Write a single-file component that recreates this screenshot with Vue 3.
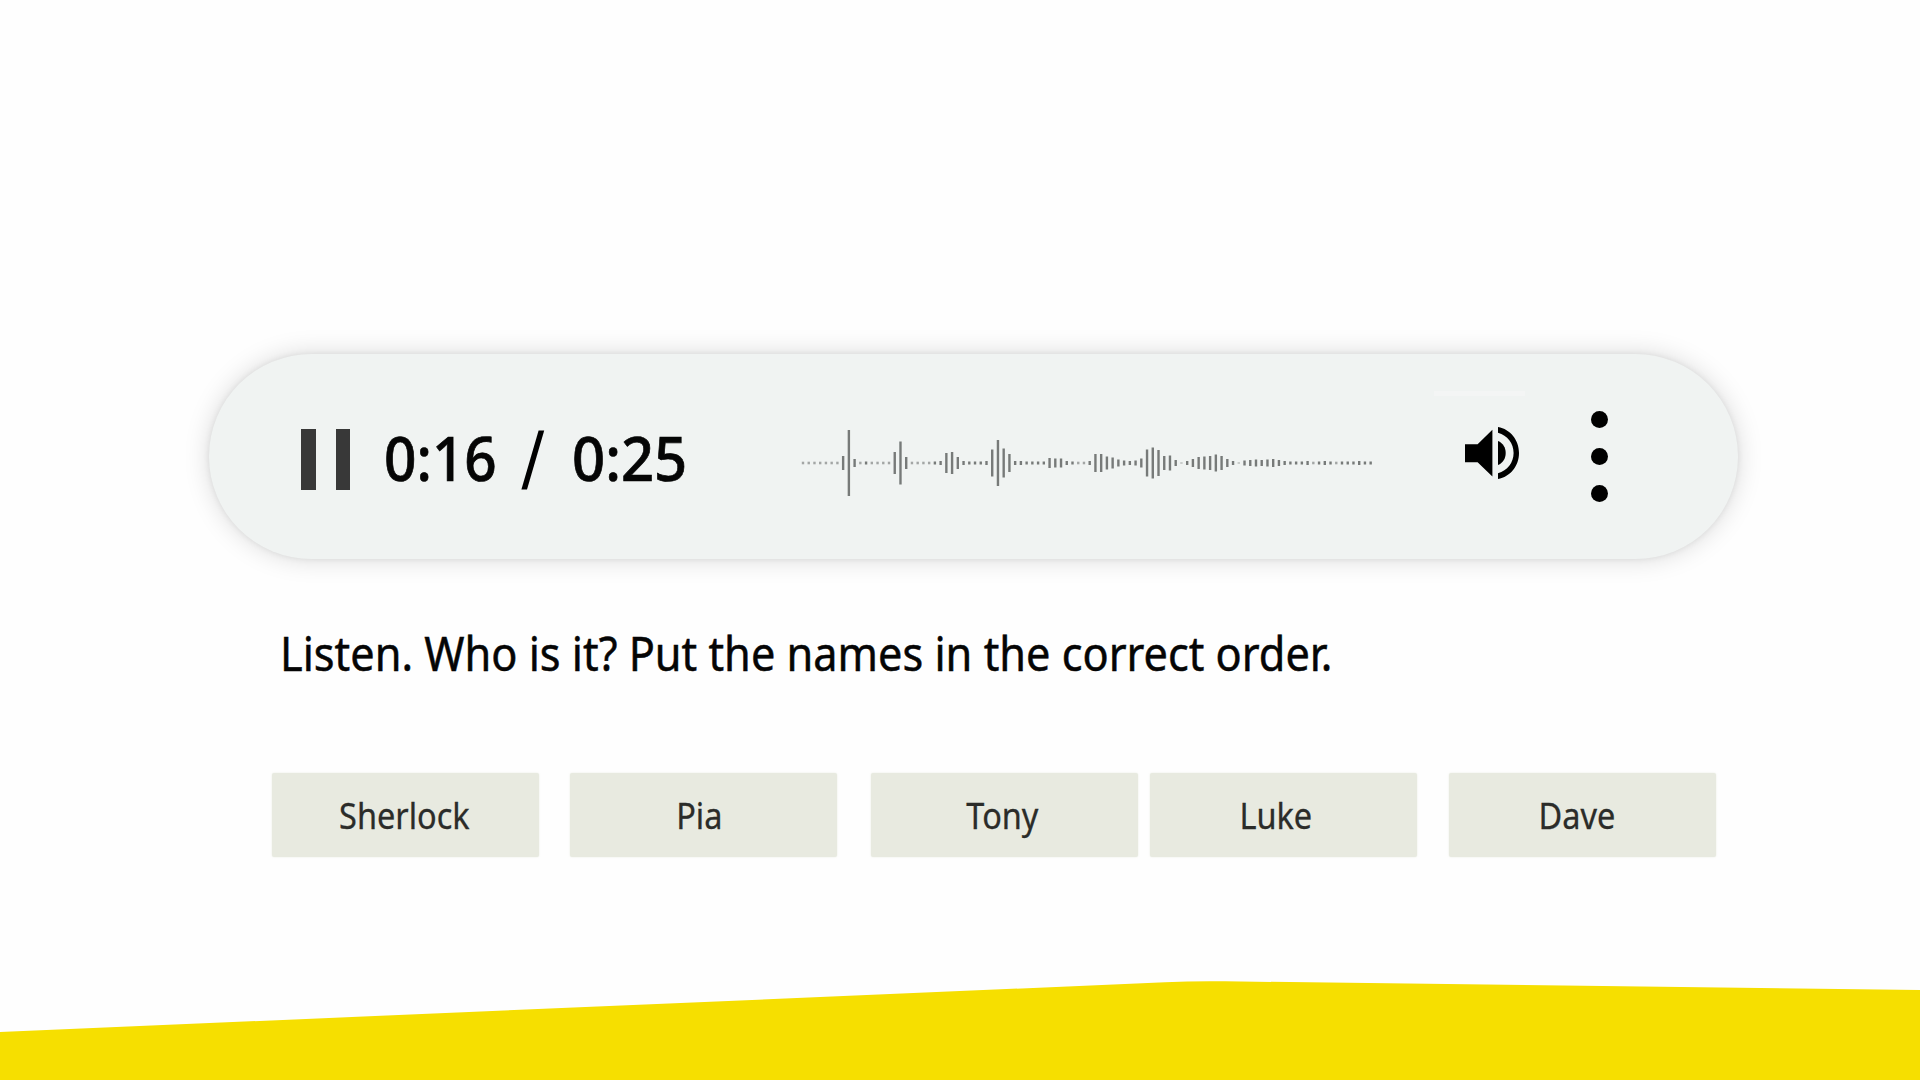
<template>
  <div class="stage">
    <div class="player">
      <button class="pause" aria-label="Pause"><span class="bar"></span><span class="bar"></span></button>
      <div class="time">
        <span class="num cur">0:16</span>
        <svg class="slash" viewBox="0 0 24 60"><path d="M17.6 0.5H23.2L6 59.5H0.4Z" /></svg>
        <span class="num total">0:25</span>
      </div>
      <svg class="wave" viewBox="0 0 572 70">
        <line
          v-for="(h, i) in levels"
          :key="i"
          :x1="2 + i * 5.734"
          :x2="2 + i * 5.734"
          :y1="35 - h / 2"
          :y2="35 + h / 2"
          :class="{ dim: h < 3 }"
        />
      </svg>
      <div class="volume">
        <span class="glint"></span>
        <svg class="speaker" viewBox="0 0 54 52">
          <path d="M0 17.3H12.6L27.4 2.7V49.6L12.6 35.3H0Z" />
          <path d="M33 14C37.9 16 40.7 20.6 40.7 26S37.9 36 33 38Z" />
          <path d="M33 0C45.4 2.2 54 13 54 26S45.4 49.8 33 52V46.2C42.4 43.6 48.6 35.6 48.6 26S42.4 8.4 33 5.8Z" />
        </svg>
      </div>
      <div class="menu"><span></span><span></span><span></span></div>
    </div>

    <p class="prompt"><span class="prompt-text">Listen. Who is it? Put the names in the correct order.</span></p>

    <div class="names">
      <div v-for="name in names" :key="name" class="name" :class="name.toLowerCase()">
        <span>{{ name }}</span>
      </div>
    </div>

    <svg class="ground" viewBox="0 0 1920 100">
      <path d="M0 52L1165 2.3Q1195 0.8 1225 1.3L1920 10V100H0Z" />
    </svg>
  </div>
</template>

<script setup>
const names = ['Sherlock', 'Pia', 'Tony', 'Luke', 'Dave']

// bar heights of the waveform, left to right
const levels = [
  2.6, 2.6, 2.6, 2.6, 2.6, 2.6, 2.6, 14, 66, 8,
  2.6, 3, 2.6, 2.6, 2.6, 2.6, 22, 43, 12, 2.6,
  2.6, 2.6, 2.6, 3, 4, 20, 22, 12, 4, 3,
  3, 3, 4, 27, 46, 29, 18, 4, 4, 3,
  3, 3, 3, 10, 9, 9, 4, 3, 2.6, 2.6,
  4, 18, 18, 13, 11, 7, 5, 4, 5, 9,
  27, 31, 26, 14, 15, 6, 1, 4, 8, 12,
  13, 14, 17, 14, 8, 4, 1, 5, 6, 7,
  6, 7, 8, 6, 4, 3, 3, 3, 4, 2.6,
  3, 4, 3, 2.6, 3, 3, 3, 4, 3, 3
]
</script>

<style>
body {
  margin: 0;
  overflow: hidden;
}
</style>

<style scoped>
.stage {
  width: 1920px;
  height: 1080px;
  box-sizing: border-box;
  padding-top: 354px;
  display: flex;
  flex-direction: column;
  background: #fefefe;
  color: #050505;
  font-family: "Noto Sans", sans-serif;
  overflow: hidden;
}

.player {
  width: 1529px;
  height: 205px;
  margin-left: 209px;
  box-sizing: border-box;
  padding-left: 92px;
  flex-shrink: 0;
  display: flex;
  align-items: center;
  background: #f0f3f2;
  border-radius: 103px;
  box-shadow: 0 0 6px rgba(0, 0, 0, 0.08), 0 0 26px rgba(0, 0, 0, 0.15);
}

.pause {
  display: flex;
  gap: 20px;
  width: 49px;
  height: 61px;
  margin-top: 5px;
  padding: 0;
  border: 0;
  background: none;
}
.pause .bar { width: 14.5px; height: 61px; background: #383838; }

.time {
  display: flex;
  align-items: center;
  width: 306px;
  height: 60px;
  margin: 6px 0 0 34px;
}
.num {
  font-size: 61px;
  font-weight: 500;
  line-height: 60px;
  white-space: nowrap;
  -webkit-text-stroke: 0.7px #050505;
  transform-origin: 0 50%;
  transform: translateY(-2px) scaleX(0.93);
}
.cur { width: 137px; }
.slash { width: 24px; height: 60px; }
.total {
  width: 112px;
  margin-left: 27px;
  transform: translateY(-2px) scaleX(0.95);
}

.wave { width: 572px; height: 70px; margin: 13px 0 0 111px; }
.wave line { stroke: #777a79; stroke-width: 2.4; }
.wave .dim { stroke: #a3a6a5; }

.volume {
  width: 91px;
  height: 135px;
  margin-left: 61px;
  display: flex;
  flex-direction: column;
  align-items: center;
}
.glint { width: 91px; height: 5px; background: #f4f5f5; margin-top: 2px; }
.speaker { width: 54px; height: 52px; margin: 31px 0 0 24px; }

.menu {
  display: flex;
  flex-direction: column;
  gap: 20px;
  margin-left: 66px;
}
.menu span { width: 17px; height: 17px; border-radius: 50%; background: #000; }

.prompt {
  height: 64px;
  margin: 62px 0 0 280px;
  font-size: 47px;
  line-height: 64px;
  white-space: nowrap;
}
.prompt-text {
  display: inline-block;
  -webkit-text-stroke: 0.5px #050505;
  transform-origin: 0 50%;
  transform: scaleX(0.921);
}

.names { display: flex; margin: 88px 0 0 272px; }
.name {
  width: 267px;
  height: 84px;
  box-sizing: border-box;
  flex-shrink: 0;
  display: flex;
  align-items: center;
  justify-content: center;
  background: #e8eae0;
  border-radius: 2px;
  box-shadow: 0 0 2px rgba(232, 234, 224, 0.9);
  color: #2b2c29;
  font-size: 35.5px;
}
.name span {
  -webkit-text-stroke: 0.3px #2b2c29;
  transform: translateY(-0.5px) scaleX(0.915);
}
.sherlock { padding-right: 2px; }
.pia { margin-left: 31px; padding-right: 8px; }
.tony { margin-left: 34px; padding-right: 5px; }
.luke { margin-left: 12px; padding-right: 16px; }
.dave { margin-left: 32px; padding-right: 11px; }

.ground { width: 1920px; height: 100px; margin-top: auto; flex-shrink: 0; }
.ground path { fill: #f6df00; }
</style>
